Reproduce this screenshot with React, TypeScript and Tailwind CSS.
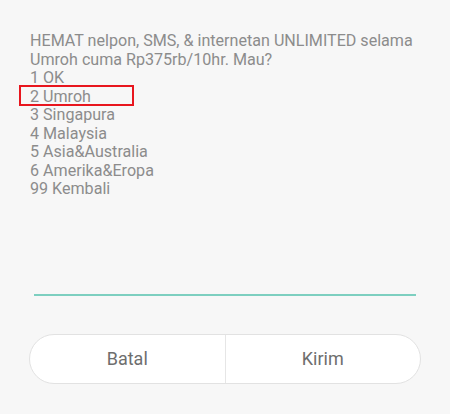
const lines = [
  "HEMAT nelpon, SMS, & internetan UNLIMITED selama",
  "Umroh cuma Rp375rb/10hr. Mau?",
  "1 OK",
  "2 Umroh",
  "3 Singapura",
  "4 Malaysia",
  "5 Asia&Australia",
  "6 Amerika&Eropa",
  "99 Kembali",
];

export default function App() {
  return (
    <div className="h-[414px] w-[450px] overflow-hidden bg-[#f7f7f7] font-['Roboto',sans-serif]">
      <div className="pl-[30px] pt-[32px] text-[16.1px] leading-[18.5px] text-[#8c8c8c]">
        {lines.map((line, i) => (
          <div key={i} className="relative">
            {line}
            {i === 3 && (
              <span className="absolute left-[-11px] top-[-3px] h-[21px] w-[115px] border-2 border-[#e8161e]" />
            )}
          </div>
        ))}
      </div>

      <div className="mx-[34px] mt-[95px] h-[2px] bg-[#7dcfc0]" />

      <div className="mx-[29px] mt-[38px] flex h-[50px] overflow-hidden rounded-full border border-[#e2e2e2] bg-white text-[18px] text-[#6e6e6e]">
        <button className="flex flex-1 items-center justify-center border-r border-[#e6e6e6]">Batal</button>
        <button className="flex flex-1 items-center justify-center">Kirim</button>
      </div>
    </div>
  );
}
